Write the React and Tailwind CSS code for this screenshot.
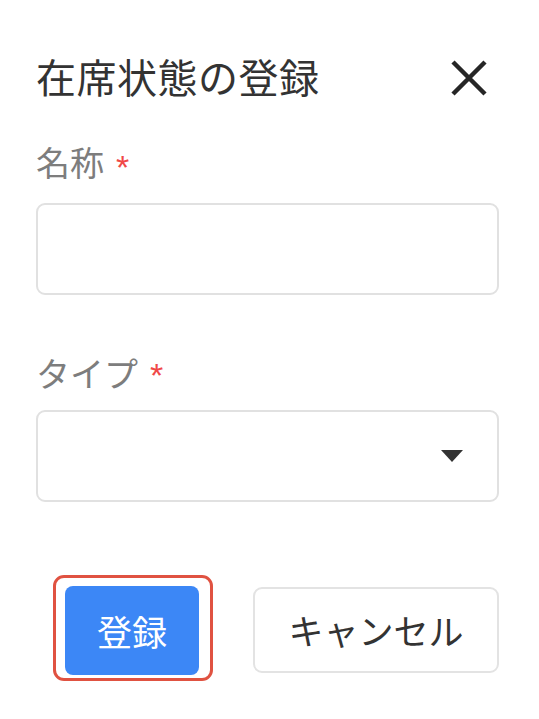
import React from "react";

export default function App() {
  const font = { fontFamily: '"Noto Sans CJK JP", "Noto Sans", sans-serif' };
  return (
    <div className="w-[539px] h-[719px] bg-white overflow-hidden" style={font}>
      <div className="pl-[36px] pr-[40px] pt-[56px]">
        {/* header */}
        <div className="flex items-center justify-between h-[44px]">
          <h2 className="text-[40px] leading-[44px] text-[#333333] font-normal tracking-[0.5px] -mt-[4px]">在席状態の登録</h2>
          <button className="mr-[11px] w-[38px] h-[38px] flex items-center justify-center">
            <svg width="38" height="38" viewBox="0 0 38 38">
              <path d="M3 3 L35 35 M35 3 L3 35" stroke="#262626" strokeWidth="4.5" strokeLinecap="butt" />
            </svg>
          </button>
        </div>

        {/* name field */}
        <div className="mt-[44px] flex items-start h-[36px]">
          <span className="text-[34px] leading-[36px] text-[#7d7d7d]">名称</span>
          <span
            className="ml-[12px] mt-[6px] text-[34px] leading-[34px] h-[34px] text-[#f04848]"
            style={{ fontFamily: '"Liberation Sans", Arial, sans-serif' }}
          >
            *
          </span>
        </div>
        <div className="mt-[23px] h-[92px] rounded-[9px] border-2 border-[#e1e1e1] bg-white"></div>

        {/* type field */}
        <div className="mt-[60px] flex items-start h-[36px]">
          <span className="text-[34px] leading-[36px] text-[#7d7d7d]">タイプ</span>
          <span
            className="ml-[12px] mt-[3px] text-[34px] leading-[34px] h-[34px] text-[#f04848]"
            style={{ fontFamily: '"Liberation Sans", Arial, sans-serif' }}
          >
            *
          </span>
        </div>
        <div className="mt-[19px] h-[92px] rounded-[9px] border-2 border-[#e1e1e1] bg-white flex items-center justify-end pr-[34px]">
          <svg width="22" height="12" viewBox="0 0 22 12">
            <path d="M0 0 H22 L11 12 Z" fill="#333333" />
          </svg>
        </div>

        {/* buttons */}
        <div className="mt-[84px] flex items-start">
          <div className="relative ml-[29px]">
            <div className="absolute left-[-12px] top-[-11px] right-[-14px] bottom-[-6px] rounded-[11px] border-[3px] border-[#e05241]"></div>
            <button className="relative w-[134px] h-[89px] rounded-[8px] bg-[#3c87f6] text-white text-[35px] leading-[40px]">
              登録
            </button>
          </div>
          <button className="ml-[54px] mt-[1px] w-[246px] h-[86px] rounded-[9px] border-2 border-[#e3e3e3] bg-white text-[#333333] text-[35px] leading-[40px]">
            キャンセル
          </button>
        </div>
      </div>
    </div>
  );
}
